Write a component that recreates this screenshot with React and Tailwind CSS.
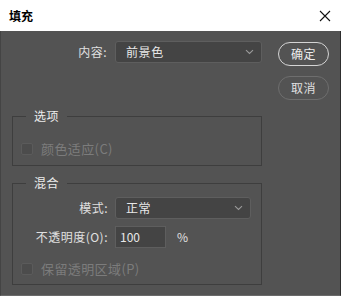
import React from "react";

const font = { fontFamily: '"Noto Sans CJK SC", "Microsoft YaHei", sans-serif' };

function Chevron() {
  return (
    <svg width="9" height="6" viewBox="0 0 9 6" className="shrink-0">
      <path d="M1 1.2 L4.5 4.5 L8 1.2" fill="none" stroke="#9a9a9a" strokeWidth="1.1" />
    </svg>
  );
}

function Select({ value, width }) {
  return (
    <div
      className={`h-[22px] ${width} flex items-center justify-between pl-[10px] pr-[7px] rounded-[3px] border border-[#5e5e5e] bg-[#444444] text-[#e8e8e8] text-[12px] tracking-[0.6px]`}
    >
      <span>{value}</span>
      <Chevron />
    </div>
  );
}

function Checkbox({ label }) {
  return (
    <div className="flex items-center gap-[8px]">
      <div className="w-[12px] h-[12px] rounded-[2px] border border-[#5b5b5b] bg-[#4c4c4c]" />
      <span className="text-[13px] leading-[16px] text-[#7c7c7c] tracking-[0.4px]">{label}</span>
    </div>
  );
}

function Group({ title, height, children }) {
  return (
    <div className={`relative w-[250px] ${height} border border-[#3e3e3e]`}>
      <span className="absolute -top-[10px] left-[13px] px-[8px] bg-[#535353] text-[12px] leading-[18px] tracking-[0.5px] text-[#ececec]">
        {title}
      </span>
      {children}
    </div>
  );
}

export default function App() {
  return (
    <div className="w-[341px] h-[296px] flex flex-col bg-[#535353] select-none" style={font}>
      <div className="h-[31px] bg-white flex items-center justify-between pl-[9px] pr-[10px] shrink-0">
        <span className="text-[12px] text-black font-bold">填充</span>
        <svg width="12" height="12" viewBox="0 0 12 12">
          <path d="M1 1 L11 11 M11 1 L1 11" stroke="#111" strokeWidth="1.1" />
        </svg>
      </div>
      <div className="flex-1 flex border-l border-[#444] border-b border-b-[#6a6a6a] border-r border-r-[#2e2e2e]">
        <div className="w-[276px] pl-[11px] pt-[10px] flex flex-col">
          <div className="flex items-center h-[22px]">
            <span className="w-[96px] text-right text-[12px] tracking-[0.5px] text-[#e0e0e0] pr-[1px]">内容:</span>
            <div className="ml-[7px]">
              <Select value="前景色" width="w-[147px]" />
            </div>
          </div>
          <div className="mt-[53px]">
            <Group title="选项" height="h-[50px]">
              <div className="pl-[8px] pt-[24px]">
                <Checkbox label="颜色适应(C)" />
              </div>
            </Group>
          </div>
          <div className="mt-[17px]">
            <Group title="混合" height="h-[102px]">
              <div className="flex flex-col pt-[13px]">
                <div className="flex items-center h-[22px]">
                  <span className="w-[95px] text-right text-[12px] tracking-[0.5px] text-[#e0e0e0]">模式:</span>
                  <div className="ml-[7px]">
                    <Select value="正常" width="w-[136px]" />
                  </div>
                </div>
                <div className="flex items-center h-[22px] mt-[7px]">
                  <span className="w-[95px] text-right text-[12px] tracking-[0.5px] text-[#e0e0e0]">不透明度(O):</span>
                  <div className="ml-[7px] w-[51px] h-[22px] border border-[#5e5e5e] bg-[#444444] flex items-center pl-[4px] text-[12px] text-[#e8e8e8]">
                    100
                  </div>
                  <span className="ml-[11px] text-[12px] text-[#e0e0e0]">%</span>
                </div>
                <div className="pl-[8px] mt-[13px]">
                  <Checkbox label="保留透明区域(P)" />
                </div>
              </div>
            </Group>
          </div>
        </div>
        <div className="flex flex-col pt-[11px] gap-[10px] pl-[1px]">
          <button className="w-[51px] h-[24px] rounded-full border-[1.5px] border-[#d4d4d4] text-[12px] tracking-[0.5px] text-[#ececec] flex items-center justify-center">
            确定
          </button>
          <button className="w-[51px] h-[24px] rounded-full border border-[#6e6e6e] text-[12px] tracking-[0.5px] text-[#e0e0e0] flex items-center justify-center">
            取消
          </button>
        </div>
      </div>
    </div>
  );
}
